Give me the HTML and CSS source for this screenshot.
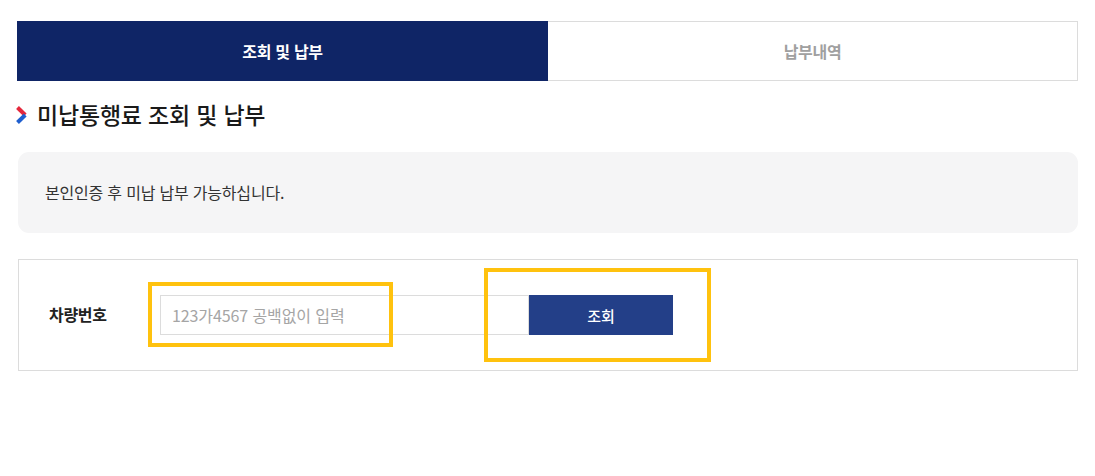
FILE: index.html
```html
<!DOCTYPE html>
<html lang="ko">
<head>
<meta charset="utf-8">
<title>미납통행료 조회 및 납부</title>
<link rel="stylesheet" href="styles.css">
</head>
<body>
<div class="page">
  <div class="tabs">
    <div class="tab active">조회 및 납부</div>
    <div class="tab">납부내역</div>
  </div>
  <h2 class="title">
    <svg class="chev" width="12" height="18" viewBox="0 0 12 18">
      <path d="M1.5 1.5 L9.2 9" stroke="#e5283c" stroke-width="4" stroke-linecap="butt" fill="none"/>
      <path d="M9.2 9 L1.5 16.5" stroke="#1f5fcf" stroke-width="4" stroke-linecap="butt" fill="none"/>
    </svg>
    <span>미납통행료 조회 및 납부</span>
  </h2>
  <div class="info">본인인증 후 미납 납부 가능하십니다.</div>
  <div class="form">
    <label class="label" for="car">차량번호</label>
    <input id="car" class="field" type="text" placeholder="123가4567 공백없이 입력">
    <button class="btn" type="button">조회</button>
    <span class="mark mark1"></span>
    <span class="mark mark2"></span>
  </div>
</div>
</body>
</html>
```

FILE: styles.css
```css
* { box-sizing: border-box; }
html, body { margin: 0; padding: 0; background: #fff; }
body {
  font-family: "Noto Sans CJK KR", "Noto Sans", sans-serif;
  color: #222;
}
.page {
  width: 1061px;
  margin: 21px 0 0 17px;
}
.tabs {
  display: flex;
  height: 60px;
}
.tab {
  flex: 1;
  display: flex;
  align-items: center;
  justify-content: center;
  font-size: 16px;
  font-weight: 700;
  color: #a0a0a0;
  border: 1px solid #dcdcdc;
  border-left: none;
  letter-spacing: -0.3px;
}
.tab.active {
  flex: 0 0 531px;
  background: #0f2566;
  color: #fff;
  border: none;
}
.title {
  display: flex;
  align-items: center;
  gap: 9px;
  margin: 18px 0 0 0;
  height: 30px;
  font-size: 23px;
  font-weight: 500;
  color: #1a1a1a;
  letter-spacing: -0.2px;
}
.chev { display: block; margin-left: -1px; margin-top: 1px; }
.info {
  margin: 23px 0 0 1px;
  height: 81px;
  background: #f5f5f6;
  border-radius: 11px;
  display: flex;
  align-items: center;
  padding: 0 0 2px 27px;
  font-size: 16px;
  color: #333;
  letter-spacing: -0.2px;
}
.form {
  position: relative;
  margin: 26px 0 0 1px;
  height: 112px;
  border: 1px solid #dcdcdc;
  display: flex;
  align-items: center;
  padding: 0 0 0 30px;
}
.label {
  width: 111px;
  font-size: 16px;
  font-weight: 700;
  color: #222;
  letter-spacing: -0.3px;
  margin-top: -2px;
}
.field {
  width: 369px;
  height: 40px;
  border: 1px solid #dcdcdc;
  padding: 0 11px;
  font-family: inherit;
  font-size: 16px;
  color: #333;
  outline: none;
  letter-spacing: -0.1px;
}
.field::placeholder { color: #a5a5a5; }
.btn {
  width: 144px;
  height: 40px;
  border: none;
  background: #233f88;
  color: #fff;
  font-family: inherit;
  font-size: 15px;
  font-weight: 500;
  cursor: pointer;
}
.mark {
  position: absolute;
  border: 4px solid #ffc20e;
  pointer-events: none;
}
.mark1 { left: 129px; top: 22px; width: 245px; height: 65px; }
.mark2 { left: 465px; top: 8px; width: 227px; height: 94px; }
```
